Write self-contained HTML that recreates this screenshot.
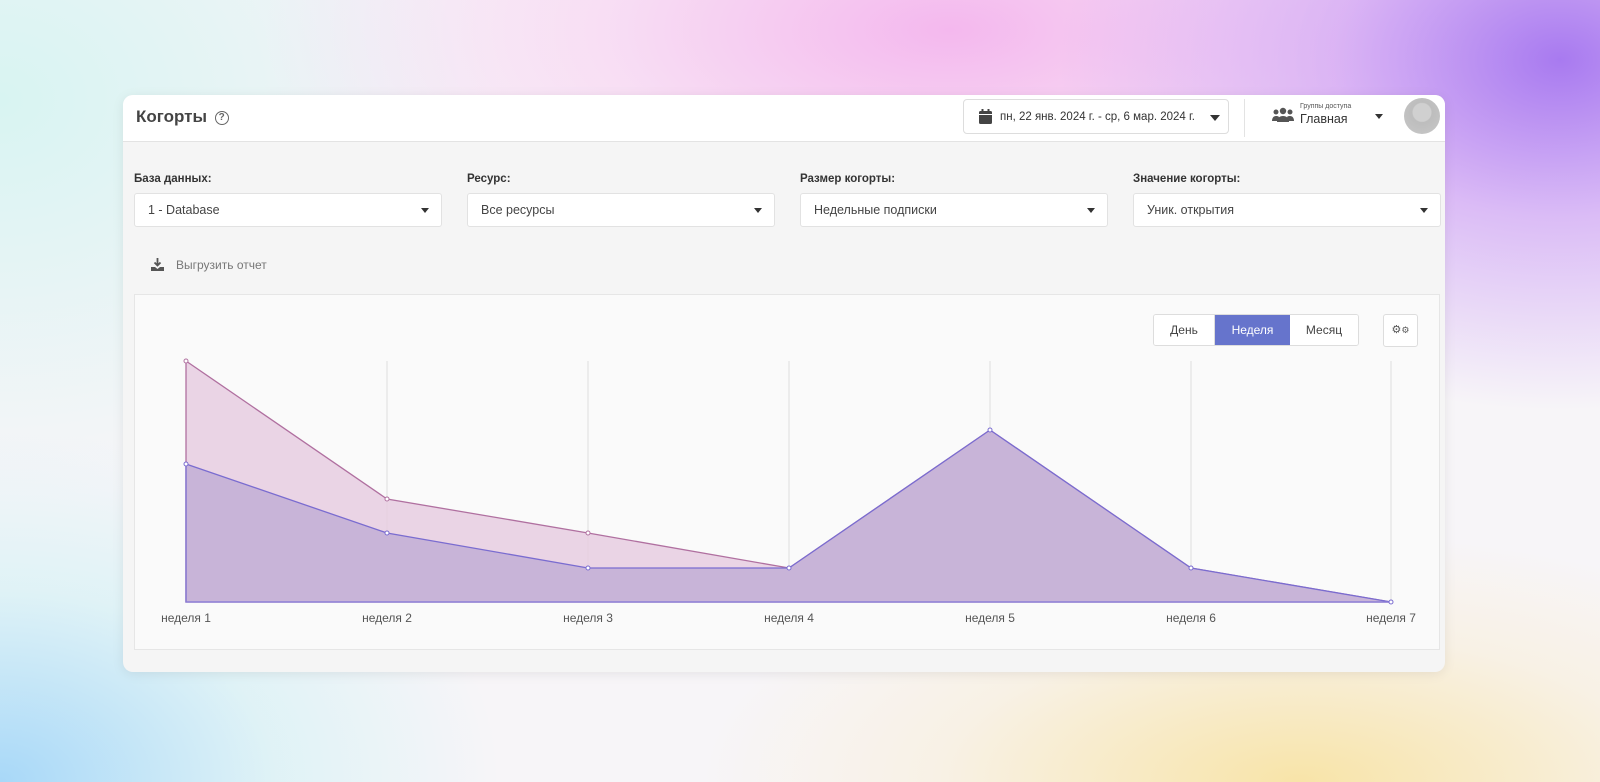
<!DOCTYPE html>
<html><head><meta charset="utf-8"><style>
*{box-sizing:border-box;margin:0;padding:0}
body{width:1600px;height:782px;overflow:hidden;font-family:"Liberation Sans","DejaVu Sans",sans-serif;position:relative;
background:
radial-gradient(ellipse 500px 350px at 1560px 60px,#a87af0 0%,rgba(200,150,245,0.6) 45%,rgba(255,255,255,0) 100%),
radial-gradient(ellipse 700px 300px at 950px 30px,#f4b8ee 0%,rgba(248,200,240,0.5) 50%,rgba(255,255,255,0) 100%),
radial-gradient(ellipse 600px 250px at 1300px 782px,#f8e4a8 0%,rgba(250,235,200,0.4) 60%,rgba(255,255,255,0) 100%),
radial-gradient(ellipse 500px 350px at 0px 782px,#a8d8f8 0%,rgba(200,240,245,0.5) 55%,rgba(255,255,255,0) 100%),
radial-gradient(ellipse 500px 400px at 0px 100px,#d8f4f2 0%,rgba(255,255,255,0) 100%),
#f7f5f8;}
.card{position:absolute;left:123px;top:95px;width:1322px;height:577px;background:#f5f5f5;border-radius:10px;overflow:hidden;box-shadow:0 2px 12px rgba(0,0,0,0.08)}
.hdr{height:47px;background:#fff;border-bottom:1px solid #e3e3e3;position:relative}
.title{position:absolute;left:13px;top:12px;font-size:17px;color:#444;font-weight:bold}
.q{display:inline-block;width:14px;height:14px;border:1.3px solid #666;border-radius:50%;font-size:10px;text-align:center;line-height:12px;color:#666;vertical-align:2px;margin-left:3px;font-weight:bold}
.date{position:absolute;left:840px;top:4px;width:266px;height:35px;border:1px solid #ddd;border-radius:4px;font-size:11.5px;color:#333;padding:11px 0 0 36px;white-space:nowrap}
.sep{position:absolute;left:1121px;top:4px;width:1px;height:38px;background:#e3e3e3}
.lbl{position:absolute;font-size:11.5px;color:#333;font-weight:bold}
.sel{position:absolute;height:34px;background:#fff;border:1px solid #e2e2e2;border-radius:3px;font-size:12.5px;color:#444;padding:9px 0 0 13px}
.caret{position:absolute;width:0;height:0;border-left:4px solid transparent;border-right:4px solid transparent;border-top:5px solid #333}
.panel{position:absolute;left:11px;top:199px;width:1306px;height:356px;background:#fafafa;border:1px solid #e6e6e6}
.btns{position:absolute;left:1018px;top:19px;height:32px;display:flex;border:1px solid #ddd;border-radius:3px;overflow:hidden;font-size:12px;color:#444}
.btns div{height:30px;line-height:30px;text-align:center;background:#fff}
.xl{position:absolute;top:316px;font-size:12px;color:#555;transform:translateX(-50%);white-space:nowrap}
</style></head><body>
<div class="card">
 <div class="hdr">
  <div class="title">Когорты <span class="q">?</span></div>
  <div class="date">
   <svg style="position:absolute;left:15px;top:9px" width="13" height="15" viewBox="0 0 13 15"><rect x="0" y="2" width="13" height="13" rx="1.5" fill="#444"/><rect x="2.5" y="0" width="2" height="4" fill="#444"/><rect x="8.5" y="0" width="2" height="4" fill="#444"/><rect x="0" y="5" width="13" height="1" fill="#fff"/></svg>
   пн, 22 янв. 2024 г. - ср, 6 мар. 2024 г.
   <div class="caret" style="left:246px;top:15px;border-left-width:5px;border-right-width:5px;border-top-width:6px"></div>
  </div>
  <div class="sep"></div>
  <svg style="position:absolute;left:1149px;top:12px" width="22" height="16" viewBox="0 0 22 16"><circle cx="11" cy="4" r="3.2" fill="#555"/><circle cx="4" cy="5" r="2.5" fill="#555"/><circle cx="18" cy="5" r="2.5" fill="#555"/><path d="M5 15c0-4 2.5-6 6-6s6 2 6 6z" fill="#555"/><path d="M0 14c0-3 1.5-5 4-5s3 1 3 1l-1.5 4z" fill="#555"/><path d="M22 14c0-3-1.5-5-4-5s-3 1-3 1l1.5 4z" fill="#555"/></svg>
  <div style="position:absolute;left:1177px;top:8px;font-size:7px;color:#555">Группы доступа</div>
  <div style="position:absolute;left:1177px;top:17px;font-size:12.5px;color:#333">Главная</div>
  <div class="caret" style="left:1252px;top:19px"></div>
  <div style="position:absolute;left:1281px;top:3px;width:36px;height:36px;border-radius:50%;background:radial-gradient(circle at 50% 40%,#d0d0d0 0 9px,#bdbdbd 10px,#c8c8c8 100%)"></div>
 </div>
 <div class="lbl" style="left:11px;top:78px">База данных:</div>
 <div class="lbl" style="left:344px;top:78px">Ресурс:</div>
 <div class="lbl" style="left:677px;top:78px">Размер когорты:</div>
 <div class="lbl" style="left:1010px;top:78px">Значение когорты:</div>
 <div class="sel" style="left:11px;top:98px;width:308px">1 - Database<div class="caret" style="left:286px;top:14px"></div></div>
 <div class="sel" style="left:344px;top:98px;width:308px">Все ресурсы<div class="caret" style="left:286px;top:14px"></div></div>
 <div class="sel" style="left:677px;top:98px;width:308px">Недельные подписки<div class="caret" style="left:286px;top:14px"></div></div>
 <div class="sel" style="left:1010px;top:98px;width:308px">Уник. открытия<div class="caret" style="left:286px;top:14px"></div></div>
 <svg style="position:absolute;left:28px;top:163px" width="13" height="13" viewBox="0 0 13 13"><path d="M6.5 0v7M3.5 4.5l3 3 3-3" stroke="#555" stroke-width="1.8" fill="none"/><path d="M0 9h4l2.5 2 2.5-2h4v4H0z" fill="#555"/></svg>
 <div style="position:absolute;left:53px;top:163px;font-size:12px;color:#777">Выгрузить отчет</div>
 <div class="panel">
  <div class="btns"><div style="width:61px;border-right:1px solid #ddd">День</div><div style="width:75px;background:#6674cc;color:#fff">Неделя</div><div style="width:68px">Месяц</div></div>
  <div style="position:absolute;left:1248px;top:19px;width:35px;height:33px;border:1px solid #ddd;border-radius:3px;background:#fff;font-size:11px;color:#555;text-align:center;line-height:31px">⚙<span style="font-size:9px">⚙</span></div>
  <svg style="position:absolute;left:0;top:0" width="1306" height="356">
   <g stroke="#ddd" stroke-width="1">
    <line x1="252" y1="66" x2="252" y2="307"/><line x1="453" y1="66" x2="453" y2="307"/><line x1="654" y1="66" x2="654" y2="307"/><line x1="855" y1="66" x2="855" y2="307"/><line x1="1056" y1="66" x2="1056" y2="307"/><line x1="1256" y1="66" x2="1256" y2="307"/>
   </g>
   <polygon points="51,66 252,204 453,238 654,273 855,135 1056,273 1256,307 51,307" fill="#e6cde0" fill-opacity="0.85" stroke="#b070a0" stroke-width="1.3"/>
   <polygon points="51,169 252,238 453,273 654,273 855,135 1056,273 1256,307 51,307" fill="#c8b4d8" stroke="#7a6cd0" stroke-width="1.3"/>
   <line x1="51" y1="307" x2="1256" y2="307" stroke="#8c80d8" stroke-width="1.3"/>
   <g fill="#fff" stroke="#b070a0"><circle cx="51" cy="66" r="2"/><circle cx="252" cy="204" r="2"/><circle cx="453" cy="238" r="2"/></g>
   <g fill="#fff" stroke="#7a6cd0"><circle cx="51" cy="169" r="2"/><circle cx="252" cy="238" r="2"/><circle cx="453" cy="273" r="2"/><circle cx="654" cy="273" r="2"/><circle cx="855" cy="135" r="2"/><circle cx="1056" cy="273" r="2"/><circle cx="1256" cy="307" r="2"/></g>
  </svg>
  <div class="xl" style="left:51px">неделя 1</div><div class="xl" style="left:252px">неделя 2</div><div class="xl" style="left:453px">неделя 3</div><div class="xl" style="left:654px">неделя 4</div><div class="xl" style="left:855px">неделя 5</div><div class="xl" style="left:1056px">неделя 6</div><div class="xl" style="left:1256px">неделя 7</div>
 </div>
</div>
</body></html>
